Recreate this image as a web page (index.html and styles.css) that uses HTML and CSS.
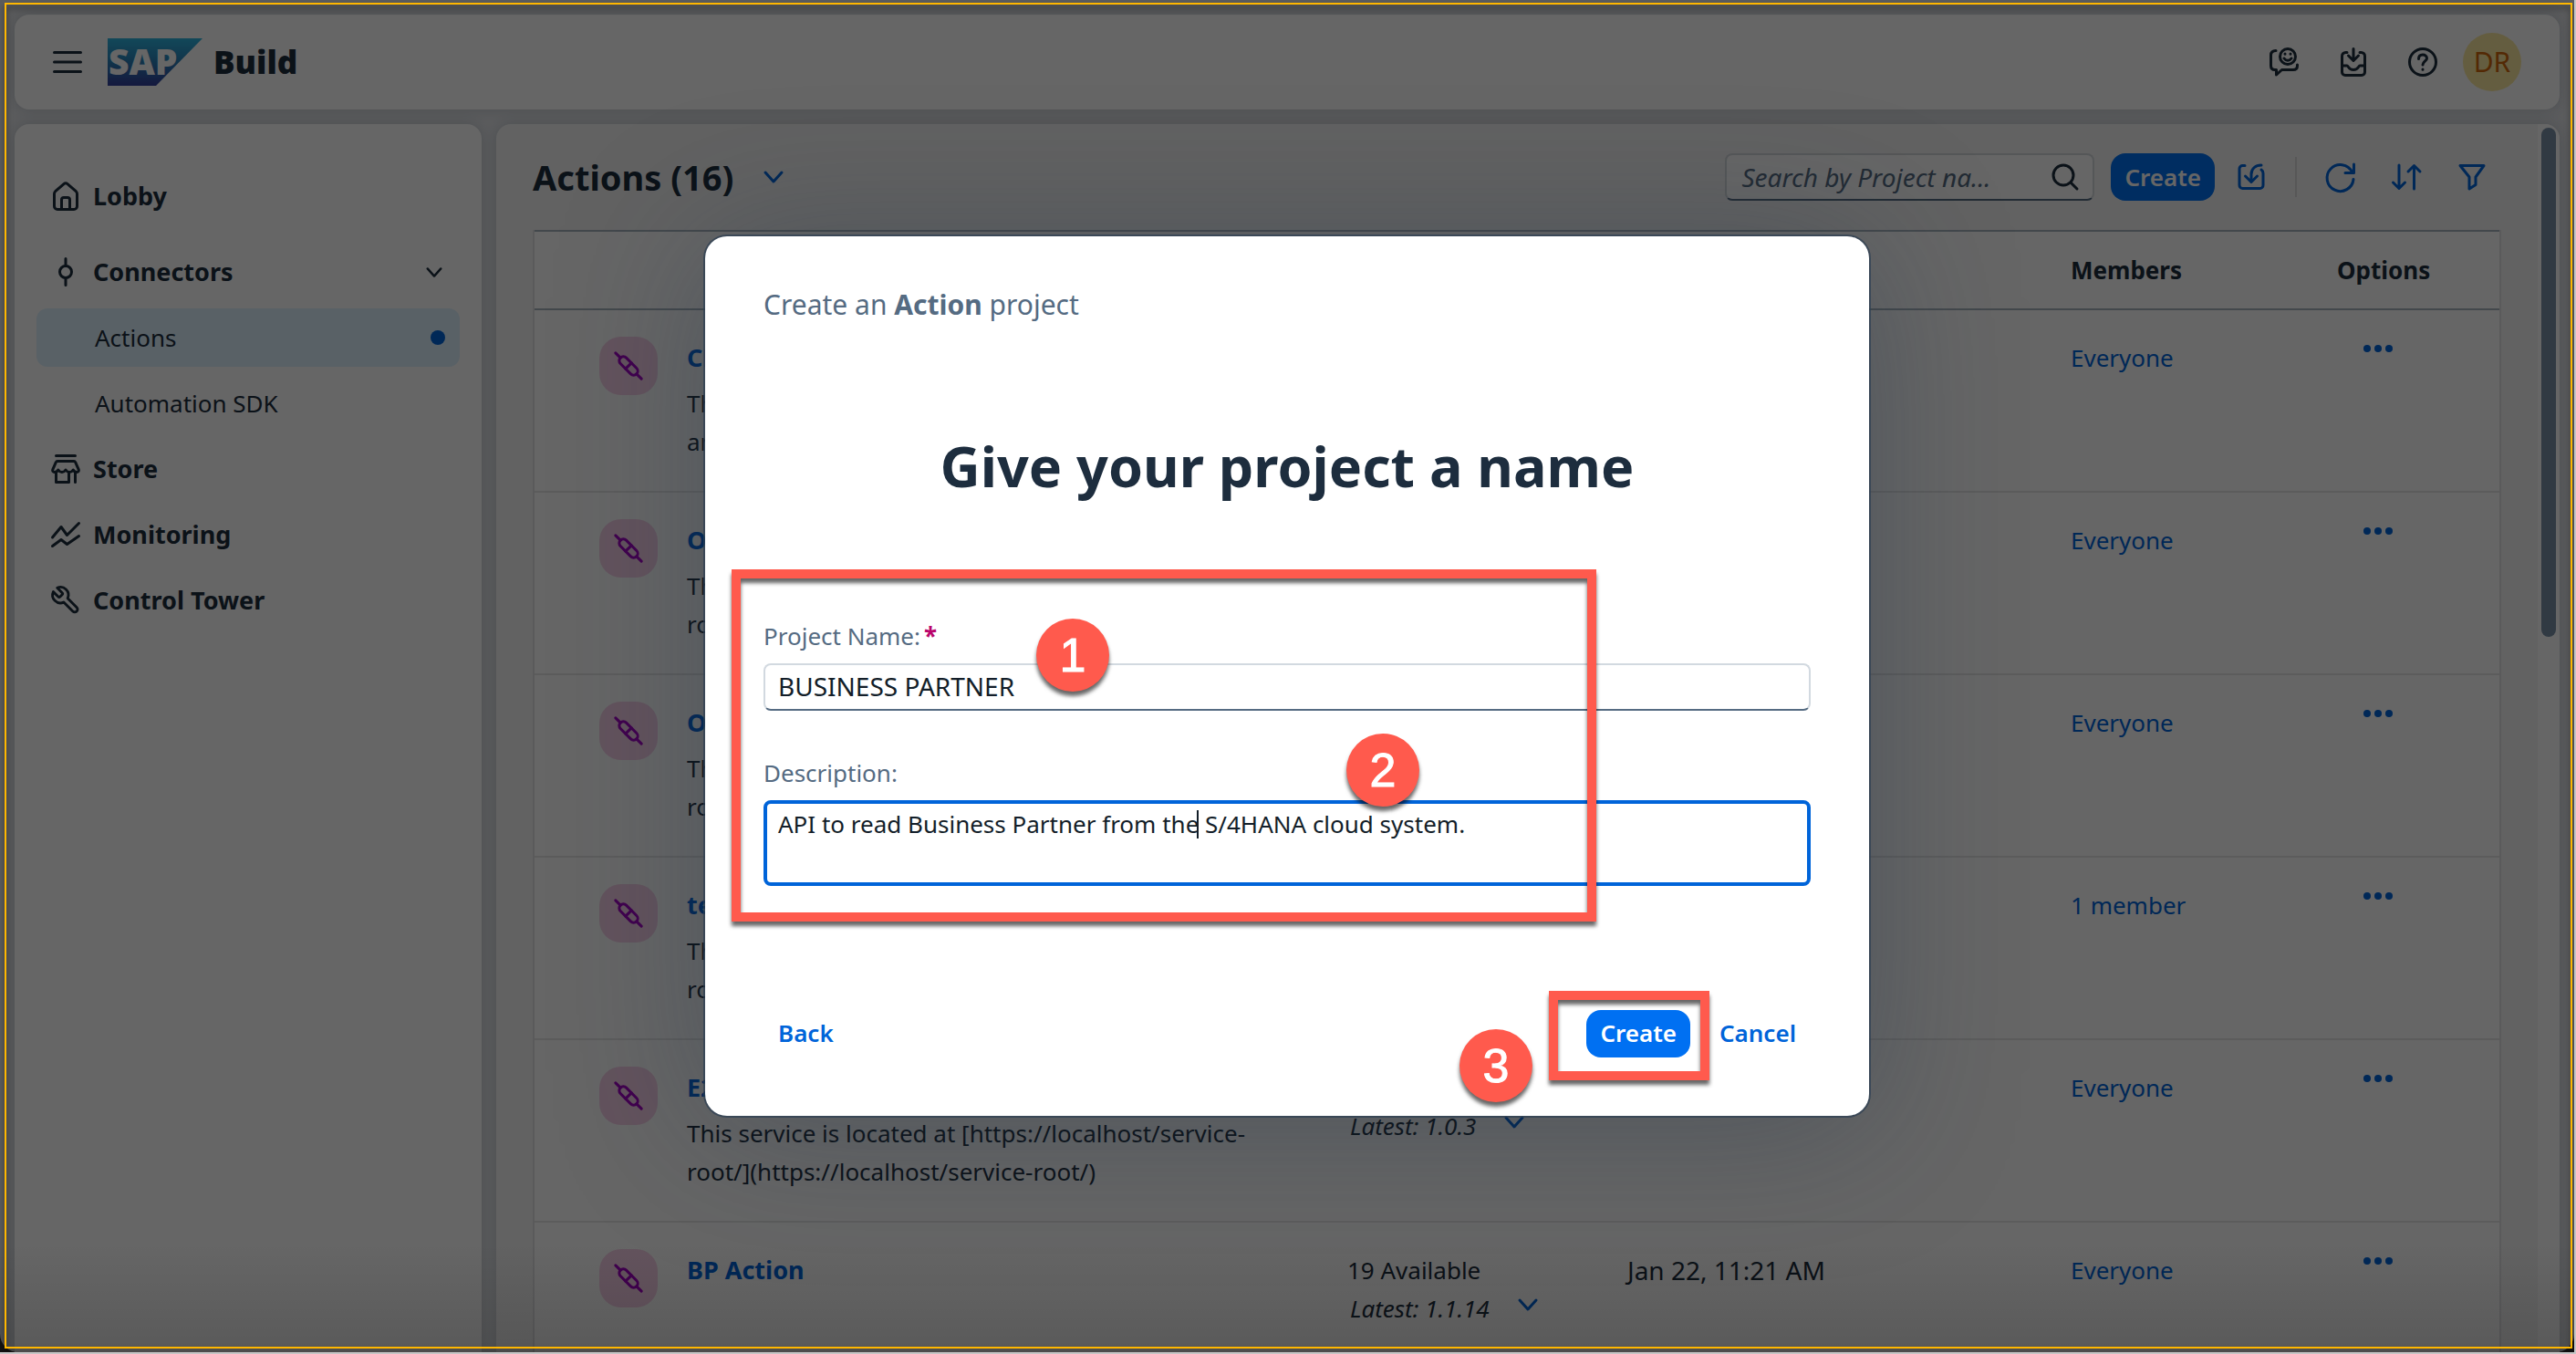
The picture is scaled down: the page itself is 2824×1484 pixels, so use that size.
FILE: index.html
```html
<!DOCTYPE html>
<html lang="en">
<head>
<meta charset="utf-8">
<meta name="viewport" content="width=device-width, initial-scale=1">
<title>SAP Build - Actions</title>
<link rel="stylesheet" href="styles.css">
</head>
<body>
<svg class="sprite" aria-hidden="true">
  <symbol id="i-chevron" viewBox="0 0 24 16"><path d="M3 3l9 10 9-10"/></symbol>
  <symbol id="i-action" viewBox="0 0 32 32"><g transform="rotate(45 16 16)"><rect x="3.500" y="11.500" width="25" height="9" rx="4.500"/><path d="M16 11.500v9M-4 16h7.500M28.500 16H36"/></g></symbol>
  <symbol id="i-dots" viewBox="0 0 32 8"><g class="solid"><circle cx="4" cy="4" r="4"/><circle cx="16" cy="4" r="4"/><circle cx="28" cy="4" r="4"/></g></symbol>
</svg>
<div class="desktop">
<div class="window">
  <div class="page">
    <header class="shell">
      <button class="bare" aria-label="Menu"><svg class="icon" viewBox="0 0 32 32"><path d="M1.500 5.500h29M1.500 16h29M1.500 26.500h29"/></svg></button>
      <svg class="logo" viewBox="0 0 104 52" role="img" aria-label="SAP">
        <defs><linearGradient id="lg" x1="0" y1="0" x2="0" y2="1"><stop offset="0" stop-color="#2fb4df"/><stop offset=".5" stop-color="#2a80b8"/><stop offset="1" stop-color="#343f9c"/></linearGradient></defs>
        <path d="M0 0h104L53 52H0z" fill="url(#lg)"/>
        <text class="logo-text" x="1" y="40">SAP</text>
      </svg>
      <span class="brand">Build</span>
      <div class="shell-tools">
        <button class="bare" aria-label="Feedback"><svg class="icon" viewBox="0 0 32 32"><path d="M7 3.500C3.500 3.500 1.500 5 1.500 8.500V20c0 3 1.500 4.500 4.500 4.500h1.500V30l6-5.500H26c3 0 4.500-1.500 4.500-4.500v-1"/><circle cx="20" cy="10" r="8.500"/><path d="M16 12c2 3 6 3 8 0M17 7v.2M23 7v.2"/></svg></button>
        <button class="bare" aria-label="Downloads"><svg class="icon" viewBox="0 0 32 32"><path d="M9 5.500H7.500a4 4 0 0 0-4 4V27A3.500 3.500 0 0 0 7 30.500h18a3.500 3.500 0 0 0 3.500-3.500V9.500a4 4 0 0 0-4-4H23M16 1.500V14M10.500 9l5.500 5.500L21.500 9M3.500 20H9c1.500 0 1.500 4.500 7 4.500s5.500-4.500 7-4.500h5.500"/></svg></button>
        <button class="bare" aria-label="Help"><svg class="icon" viewBox="0 0 32 32"><circle cx="16" cy="16" r="14.500"/><path d="M11.500 12.500c0-3 2-4.500 4.500-4.500s4.500 1.500 4.500 4-4.500 3.500-4.500 7M16 24v.3"/></svg></button>
        <button class="user" aria-label="User DR">DR</button>
      </div>
    </header>

    <div class="columns">
      <nav class="side">
        <a class="item lobby" href="#"><svg class="icon" viewBox="0 0 32 32"><path d="M3.500 13.500c0-1 .4-2 1.200-2.800L14 2.600c1.200-1 2.800-1 4 0l9.300 8.100c.8.8 1.200 1.800 1.200 2.800V27a3.500 3.500 0 0 1-3.500 3.500H7A3.500 3.500 0 0 1 3.500 27zM11.500 30V20a2.500 2.500 0 0 1 2.500-2.500h4a2.500 2.500 0 0 1 2.500 2.500v10"/></svg>Lobby</a>
        <a class="item" href="#"><svg class="icon" viewBox="0 0 32 32"><circle cx="16" cy="16" r="6.500"/><path d="M16 1.500v8M16 22.500v8"/></svg>Connectors<svg class="chevron small" viewBox="0 0 24 16"><use href="#i-chevron"/></svg></a>
        <a class="item sub selected" href="#" aria-current="page">Actions<span class="dot"></span></a>
        <a class="item sub" href="#">Automation SDK</a>
        <a class="item" href="#"><svg class="icon" viewBox="0 0 32 32"><path d="M5.500 1.500h21M7 7.500h18c.8 0 1.400.4 1.700 1.200l3.500 8c.5 1.500-.5 2.800-2 2.800-2 0-3.200-1-4-2.500-1 1.500-2.200 2.500-4.100 2.500s-3.100-1-4.100-2.500c-1 1.500-2.200 2.500-4.100 2.500S8.800 18.500 7.800 17c-.8 1.500-2 2.500-4 2.500-1.500 0-2.500-1.300-2-2.800l3.500-8c.3-.8.9-1.200 1.700-1.200zM5.500 20v10.500h14V20M26.500 20v10.500"/></svg>Store</a>
        <a class="item" href="#"><svg class="icon" viewBox="0 0 32 32"><path d="M1.500 19l9.500-11.500 6.500 9L30.500 3.500M1.500 28.500l9.500-7 6.500 5 13-9"/></svg>Monitoring</a>
        <a class="item" href="#"><svg class="icon" viewBox="0 0 24 24"><path class="thin" transform="matrix(-1.080 0 0 1.080 25 -1)" d="M14.700 6.300a1 1 0 0 0 0 1.400l1.600 1.600a1 1 0 0 0 1.400 0l3.770-3.770a6 6 0 0 1-7.940 7.940l-6.910 6.910a2.120 2.120 0 0 1-3-3l6.910-6.910a6 6 0 0 1 7.940-7.940l-3.760 3.760z"/></svg>Control Tower</a>
      </nav>

      <main class="main">
        <div class="content">
          <div class="toolbar">
            <h1 class="title">Actions (16)</h1>
            <button class="bare link" aria-label="Switch view"><svg class="chevron" viewBox="0 0 24 16"><use href="#i-chevron"/></svg></button>
            <div class="tools">
              <label class="search"><input type="text" aria-label="Search" placeholder="Search by Project na..."><svg class="icon" viewBox="0 0 32 32"><circle cx="14" cy="14" r="11"/><path d="M22 22l7 7"/></svg></label>
              <button class="primary">Create</button>
              <button class="tool" aria-label="Import"><svg class="icon" viewBox="0 0 32 32"><path d="M9 3.500H6.500a3.500 3.500 0 0 0-3.500 3.500v18a3.500 3.500 0 0 0 3.500 3.500h19a3.500 3.500 0 0 0 3.500-3.500V12c0-2-.5-3-2-4M27 3c-6.500 0-11 4-11 10v8M9.500 15l6.500 6.500 6.500-6.500"/></svg></button>
              <span class="divider"></span>
              <button class="tool" aria-label="Refresh"><svg class="icon" viewBox="0 0 32 32"><path d="M30 18.500A14.500 14.500 0 1 1 28.500 10.500M30.500 2v9.500H21"/></svg></button>
              <button class="tool" aria-label="Sort"><svg class="icon" viewBox="0 0 32 32"><path d="M8 3v25M1.500 22l6.500 6.500 6.500-6.500M24.500 29V4M18 10l6.500-6.500L31 10"/></svg></button>
              <button class="tool" aria-label="Filter"><svg class="icon" viewBox="0 0 32 32"><path d="M3 3.500h26L20 16v8.500l-7 4.500V16z"/></svg></button>
            </div>
          </div>

          <table class="grid">
            <colgroup><col class="c-icon"><col><col class="c-version"><col class="c-date"><col class="c-members"><col class="c-options"></colgroup>
            <thead><tr><td></td><th class="th-name">Name</th><th>Versions</th><th>Updated</th><th>Members</th><th>Options</th></tr></thead>
            <tbody>
              <tr>
                <td><span class="badge"><svg class="icon" viewBox="0 0 32 32"><use href="#i-action"/></svg></span></td>
                <td><a class="name" href="#">CPI</a><p class="desc">This<br>and</p></td>
                <td></td><td></td>
                <td><a class="link" href="#">Everyone</a></td>
                <td><button class="more" aria-label="More"><svg viewBox="0 0 32 8"><use href="#i-dots"/></svg></button></td>
              </tr>
              <tr>
                <td><span class="badge"><svg class="icon" viewBox="0 0 32 32"><use href="#i-action"/></svg></span></td>
                <td><a class="name" href="#">OData</a><p class="desc">This<br>root/</p></td>
                <td></td><td></td>
                <td><a class="link" href="#">Everyone</a></td>
                <td><button class="more" aria-label="More"><svg viewBox="0 0 32 8"><use href="#i-dots"/></svg></button></td>
              </tr>
              <tr>
                <td><span class="badge"><svg class="icon" viewBox="0 0 32 32"><use href="#i-action"/></svg></span></td>
                <td><a class="name" href="#">OData</a><p class="desc">This<br>root/</p></td>
                <td></td><td></td>
                <td><a class="link" href="#">Everyone</a></td>
                <td><button class="more" aria-label="More"><svg viewBox="0 0 32 8"><use href="#i-dots"/></svg></button></td>
              </tr>
              <tr>
                <td><span class="badge"><svg class="icon" viewBox="0 0 32 32"><use href="#i-action"/></svg></span></td>
                <td><a class="name" href="#">test</a><p class="desc">This<br>root/</p></td>
                <td></td><td></td>
                <td><a class="link" href="#">1 member</a></td>
                <td><button class="more" aria-label="More"><svg viewBox="0 0 32 8"><use href="#i-dots"/></svg></button></td>
              </tr>
              <tr>
                <td><span class="badge"><svg class="icon" viewBox="0 0 32 32"><use href="#i-action"/></svg></span></td>
                <td><a class="name" href="#">E2E</a><p class="desc">This service is located at [https://localhost/service-root/](https://localhost/service-root/)</p></td>
                <td>4 Available<div class="latest">Latest: 1.0.3<button class="bare link" aria-label="Show versions"><svg class="chevron" viewBox="0 0 24 16"><use href="#i-chevron"/></svg></button></div></td>
                <td></td>
                <td><a class="link" href="#">Everyone</a></td>
                <td><button class="more" aria-label="More"><svg viewBox="0 0 32 8"><use href="#i-dots"/></svg></button></td>
              </tr>
              <tr>
                <td><span class="badge"><svg class="icon" viewBox="0 0 32 32"><use href="#i-action"/></svg></span></td>
                <td><a class="name" href="#">BP Action</a></td>
                <td>19 Available<div class="latest">Latest: 1.1.14<button class="bare link" aria-label="Show versions"><svg class="chevron" viewBox="0 0 24 16"><use href="#i-chevron"/></svg></button></div></td>
                <td class="date">Jan 22, 11:21 AM</td>
                <td><a class="link" href="#">Everyone</a></td>
                <td><button class="more" aria-label="More"><svg viewBox="0 0 32 8"><use href="#i-dots"/></svg></button></td>
              </tr>
            </tbody>
          </table>
        </div>
        <div class="track"><div class="thumb"></div></div>
      </main>
    </div>
  </div>

  <div class="overlay">
    <form class="dialog" role="dialog" aria-labelledby="dlg-title">
      <p class="kicker">Create an <b>Action</b> project</p>
      <h2 class="headline" id="dlg-title">Give your project a name</h2>
      <div class="field">
        <label for="pname">Project Name:<span class="required">*</span></label>
        <input class="text" id="pname" type="text" value="BUSINESS PARTNER">
      </div>
      <div class="field">
        <label for="pdesc">Description:</label>
        <div class="area-wrap">
          <textarea class="area" id="pdesc" spellcheck="false">API to read Business Partner from the S/4HANA cloud system.</textarea>
          <span class="caret"></span>
        </div>
      </div>
      <div class="actions">
        <button class="flat" type="button">Back</button>
        <button class="primary push" type="button">Create</button>
        <button class="flat" type="button">Cancel</button>
      </div>
      <div class="mark mark-fields"></div>
      <div class="mark mark-create"></div>
      <span class="step step-1">1</span>
      <span class="step step-2">2</span>
      <span class="step step-3">3</span>
    </form>
  </div>
  <div class="frame"></div>
</div>
</div>
</body>
</html>
```
FILE: styles.css
```css
* { box-sizing: border-box; }

body {
  margin: 0;
  font-family: "Noto Sans", "Open Sans", sans-serif;
  font-size: 26px;
  line-height: 42px;
  color: #1d2d3e;
}

button, input, textarea { font: inherit; color: inherit; margin: 0; }
button { padding: 0; border: 0; background: none; cursor: pointer; }
a { color: inherit; text-decoration: none; }
h1, h2, p { margin: 0; }

.sprite { position: absolute; width: 0; height: 0; }

.icon, .chevron, .more svg {
  display: block;
  flex: none;
  fill: none;
  stroke: currentColor;
  stroke-width: 3;
  stroke-linecap: round;
  stroke-linejoin: round;
  overflow: visible;
}
.icon { width: 32px; height: 32px; }
.chevron { width: 24px; height: 16px; }
.chevron.small { width: 20px; height: 13px; margin-left: auto; }
.thin { stroke-width: 2; }
.solid { fill: currentColor; stroke: none; }
.bare { display: flex; }
.link { color: #0064d9; }

/* window */
.desktop { height: 100vh; padding: 0 2px 2px 0; background: #c6c6c6; }
.window { position: relative; height: 100%; overflow: hidden; background: #333; }
.page {
  display: flex;
  flex-direction: column;
  gap: 16px;
  height: 100%;
  padding: 16px 16px 0;
  border-radius: 0 0 20px 20px;
  background: #e4e6ea;
}

/* shell bar */
.shell {
  display: flex;
  align-items: center;
  flex: none;
  height: 104px;
  padding: 0 42px;
  border-radius: 16px;
  background: #fff;
  box-shadow: 0 0 16px rgba(34, 53, 72, .2);
}
.logo { width: 104px; height: 52px; margin: 0 12px 0 28px; }
.logo-text { font-size: 39px; font-weight: 900; fill: #fff; }
.brand { font-size: 35px; font-weight: 900; }
.shell-tools { display: flex; align-items: center; gap: 44px; margin-left: auto; }
.user {
  width: 64px;
  height: 64px;
  margin-left: -16px;
  border-radius: 50%;
  background: #fbe9a0;
  color: #d0680c;
  font-size: 30px;
}

/* side navigation */
.columns { display: flex; gap: 16px; flex: 1; min-height: 0; }
.side {
  display: flex;
  flex-direction: column;
  gap: 8px;
  flex: none;
  width: 512px;
  padding: 47px 24px 0;
  border-radius: 16px 16px 0 0;
  background: #fff;
  box-shadow: 0 0 16px rgba(34, 53, 72, .2);
}
.item {
  display: flex;
  align-items: center;
  gap: 14px;
  height: 64px;
  padding: 0 18px 0 16px;
  border-radius: 12px;
  font-size: 27px;
  font-weight: 700;
}
.lobby { margin-bottom: 11px; }
.sub { padding: 0 16px 0 64px; font-size: 26px; font-weight: 400; }
.selected { background: #def2ff; }
.dot { width: 16px; height: 16px; margin-left: auto; border-radius: 50%; background: #0064d9; }

/* main panel */
.main {
  display: flex;
  flex: 1;
  min-width: 0;
  overflow: hidden;
  border-radius: 16px 16px 0 0;
  background: #f5f6f6;
  box-shadow: 0 0 16px rgba(34, 53, 72, .2);
}
.content { flex: 1; min-width: 0; padding: 32px 40px 0; }
.track { width: 24px; padding: 4px; background: #fff; }
.thumb { height: 558px; border-radius: 8px; background: #7b91a8; }

.toolbar { display: flex; align-items: center; height: 52px; margin-bottom: 32px; }
.title { font-size: 38px; font-weight: 700; margin-right: 32px; }
.tools { display: flex; align-items: center; margin-left: auto; padding-right: 4px; }
.search {
  display: flex;
  align-items: center;
  width: 405px;
  height: 52px;
  padding: 0 14px 0 16px;
  margin-right: 18px;
  border: 2px solid #d5d9dd;
  border-bottom-color: #556b82;
  border-radius: 8px;
  background: #fff;
}
.search input {
  flex: 1;
  min-width: 0;
  padding: 0;
  border: 0;
  outline: 0;
  background: none;
  font-size: 28px;
  line-height: 40px;
  font-style: italic;
}
.search input::placeholder { color: #556b82; opacity: 1; }
.primary {
  height: 52px;
  padding: 0 15px;
  border-radius: 16px;
  background: #0070f2;
  color: #fff;
  font-weight: 600;
  line-height: 36px;
}
.tool { display: flex; justify-content: center; width: 56px; margin-left: 16px; color: #0064d9; }
.primary + .tool { margin-left: 12px; }
.divider { width: 2px; height: 44px; margin: 0 4px 0 20px; background: #d9d9d9; }

.grid {
  width: 100%;
  table-layout: fixed;
  border-spacing: 0;
  border: 0 solid #e0e2e4;
  border-width: 0 2px;
  background: #fff;
}
.c-icon { width: 167px; }
.c-version { width: 307px; }
.c-date { width: 486px; }
.c-members { width: 292px; }
.c-options { width: 178px; }
.grid td, .grid th { padding: 0; text-align: left; vertical-align: top; }
.grid thead th, .grid thead td {
  height: 88px;
  vertical-align: middle;
  border: 0 solid #a8b3bd;
  border-width: 2px 0;
  font-weight: 700;
}
.grid .th-name { padding-left: 18px; }
.grid tbody td { height: 200px; padding-top: 31px; border-bottom: 2px solid #e5e5e5; }
.grid tbody td:first-child { padding-top: 29px; }
.badge {
  display: flex;
  align-items: center;
  justify-content: center;
  width: 64px;
  height: 64px;
  margin-left: 71px;
  border-radius: 24px;
  background: #f7d0e8;
  color: #a100c2;
}
.name { display: block; font-size: 27px; font-weight: 700; color: #0064d9; }
.desc { max-width: 650px; margin-top: 8px; }
.latest { display: flex; align-items: center; gap: 30px; padding-left: 3px; font-style: italic; }
.latest .bare { padding-bottom: 8px; }
.grid .date { font-size: 28px; }
.more { display: flex; margin: 7px 0 0 29px; color: #0064d9; }
.more svg { width: 32px; height: 8px; }

/* dialog */
.overlay {
  position: absolute;
  inset: 0;
  display: flex;
  align-items: center;
  justify-content: center;
  background: linear-gradient(to top, rgba(0, 0, 0, .12), transparent 120px), rgba(0, 0, 0, .6);
}
.dialog {
  position: relative;
  width: 1276px;
  max-width: 92%;
  padding: 55px 64px 64px;
  border-radius: 24px;
  background: #fff;
  box-shadow: 0 0 0 2px rgba(44, 62, 82, .7), 0 10px 160px rgba(34, 53, 72, .35);
}
.kicker { font-size: 30px; line-height: 40px; color: #556b82; }
.headline {
  margin: 117px 0 128px;
  font-size: 61px;
  line-height: 80px;
  font-weight: 700;
  text-align: center;
}
.field { display: flex; flex-direction: column; gap: 12px; line-height: 36px; }
.field + .field { margin-top: 50px; }
.field label { color: #556b82; }
.required { margin-left: 4px; font-weight: 700; color: #ba066c; }
.text {
  height: 52px;
  padding: 0 14px 2px;
  border: 2px solid #d2d9e0;
  border-bottom-color: #556b82;
  border-radius: 8px;
  background: #fff;
  color: #131e29;
  font-size: 28px;
}
.area-wrap { position: relative; display: flex; }
.area {
  flex: 1;
  height: 94px;
  padding: 4px 12px;
  border: 4px solid #0064d9;
  border-radius: 8px;
  outline: 0;
  resize: none;
  background: #fff;
  color: #131e29;
}
.caret { position: absolute; left: 475px; top: 11px; width: 2px; height: 31px; background: #131e29; }
.actions { display: flex; gap: 16px; margin-top: 136px; }
.flat { height: 52px; padding: 0 16px 2px; color: #0064d9; font-weight: 600; }
.actions .primary { padding: 0 15px 2px; }
.push { margin-left: auto; }

/* annotations over the dialog */
.mark {
  position: absolute;
  border: 10px solid #ff5a4d;
  filter: drop-shadow(0 5px 2px rgba(0, 0, 0, .6));
  pointer-events: none;
}
.mark-fields { left: 29px; top: 365px; width: 948px; height: 386px; }
.mark-create { left: 925px; top: 827px; width: 176px; height: 98px; }
.step {
  position: absolute;
  width: 80px;
  height: 80px;
  border-radius: 50%;
  background: #ff5a4d;
  box-shadow: 0 5px 4px rgba(0, 0, 0, .6);
  color: #fff;
  font: 52px/80px "Liberation Sans", sans-serif;
  -webkit-text-stroke: 1px #fff;
  text-align: center;
}
.step-1 { left: 363px; top: 419px; }
.step-2 { left: 703px; top: 545px; }
.step-3 { left: 827px; top: 869px; }

.frame {
  position: absolute;
  inset: 3px 2px 4px 5px;
  border: 2px solid #ffb700;
  filter: drop-shadow(0 4px 3px rgba(0, 0, 0, .6));
  pointer-events: none;
}
```
